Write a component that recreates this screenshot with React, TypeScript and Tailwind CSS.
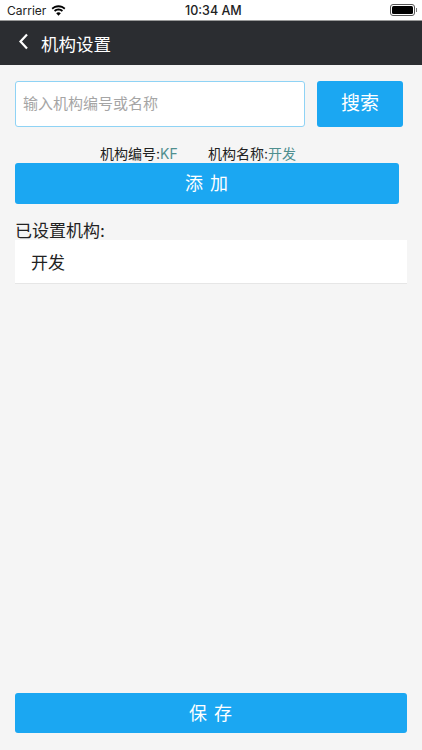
const cjk = "font-['Inter','Noto_Sans_CJK_SC',sans-serif]";

function Wifi() {
  return (
    <svg width="15" height="11" viewBox="0 0 15 11" fill="#000">
      <path d="M7.5 2.2c2.2 0 4.2.8 5.7 2.2l1.2-1.3C12.6 1.300 10.200.2 7.500.2S2.400 1.300.6 3.100l1.200 1.300c1.500-1.400 3.500-2.200 5.700-2.200z" />
      <path d="M7.500 5.400c1.300 0 2.400.5 3.300 1.300l1.200-1.300C10.800 4.300 9.200 3.600 7.500 3.600s-3.300.7-4.500 1.800l1.200 1.300c.9-.8 2-1.300 3.300-1.300z" />
      <path d="M7.500 10.700l2.300-2.500c-.6-.5-1.400-.9-2.300-.9s-1.700.4-2.300.9z" />
    </svg>
  );
}

function Battery() {
  return (
    <div className="flex items-center">
      <div className="h-[12px] w-[25px] rounded-[3px] border border-[#555] p-[1px]">
        <div className="h-full w-full rounded-[1.5px] bg-black" />
      </div>
      <div className="ml-[1px] h-[4px] w-[1px] bg-[#777]" />
    </div>
  );
}

function StatusBar() {
  return (
    <div className="relative flex h-[20px] items-center justify-between bg-white pl-[7px] pr-[5px] font-['Inter',sans-serif] text-[12px] text-[#222]">
      <div className="flex items-center gap-[5px]">
        <span className="pt-[1px]">Carrier</span>
        <Wifi />
      </div>
      <span className="absolute left-[185px] top-[2px] text-[12.500px] font-medium leading-[18px]">10:34 AM</span>
      <Battery />
    </div>
  );
}

function NavBar() {
  return (
    <div className="flex h-[45px] items-center border-t border-[#9a9a9a] bg-[#2b2d31] pl-[18px] text-white">
      <svg width="11" height="17" viewBox="0 0 11 17" fill="none" stroke="#fff" strokeWidth="2.2" className="mb-[3px]">
        <path d="M9 1.500 2.500 8.500 9 15.500" />
      </svg>
      <span className="ml-[12px] pt-[4px] text-[17.500px] leading-none">机构设置</span>
    </div>
  );
}

export default function App() {
  return (
    <div className={`flex h-[750px] w-[422px] flex-col overflow-hidden bg-[#f5f5f5] ${cjk}`}>
      <StatusBar />
      <NavBar />

      <div className="flex flex-1 flex-col px-[15px]">
        {/* search row */}
        <div className="mt-[16px] flex h-[46px] gap-[12px]">
          <div className="flex w-[290px] items-center rounded-[3px] border border-[#8fd3f5] bg-white pl-[7px] text-[15px] text-[#a5a5a5]">
            输入机构编号或名称
          </div>
          <div className="flex w-[86px] items-center justify-center rounded-[3px] bg-[#1ba7f2] text-[19px] text-white">
            搜索
          </div>
        </div>

        {/* selected item */}
        <div className="mt-[16px] flex h-[20px] items-center pl-[85px] pt-[1px] text-[14px] leading-none text-[#222]">
          <span className="w-[108px]">
            机构编号:<span className="text-[#4f8f8f]">KF</span>
          </span>
          <span>
            机构名称:<span className="text-[#4f8f8f]">开发</span>
          </span>
        </div>
        <div className="flex h-[41px] w-[384px] items-center justify-center rounded-[3px] bg-[#1ba7f2] text-[18px] tracking-[1px] text-white">
          添 加
        </div>

        {/* configured list */}
        <div className="mt-[18px] text-[17px] leading-[18px] text-[#222]">已设置机构:</div>
        <div className="flex h-[44px] w-[392px] items-center border-b border-[#e6e6e6] bg-white pl-[16px] pt-[4px] text-[17px] text-[#222]">
          开发
        </div>

        <div className="mt-auto mb-[17px] flex h-[40px] w-[392px] items-center justify-center rounded-[3px] bg-[#1ba7f2] text-[18px] tracking-[1px] text-white">
          保 存
        </div>
      </div>
    </div>
  );
}
